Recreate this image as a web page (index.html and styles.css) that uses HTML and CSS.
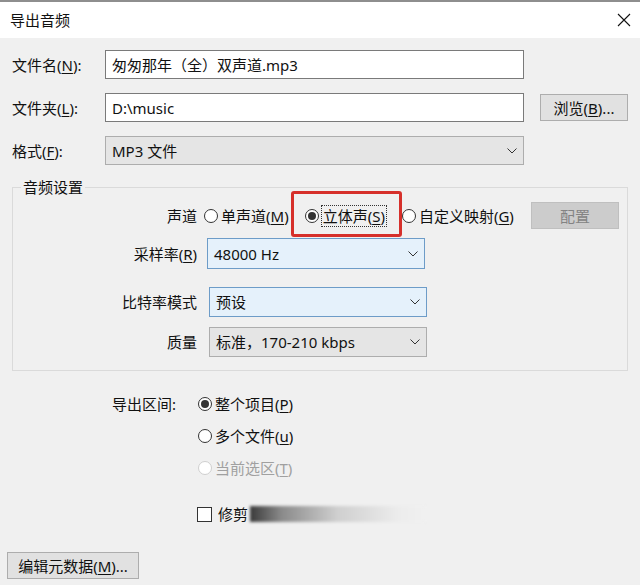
FILE: index.html
```html
<!DOCTYPE html>
<html lang="zh-CN">
<head>
<meta charset="utf-8">
<title>导出音频</title>
<link rel="stylesheet" href="styles.css">
</head>
<body>
<div class="window">
  <div class="titlebar">
    <span class="title">导出音频</span>
    <svg class="close" width="14" height="14" viewBox="0 0 14 14"><path d="M1 1L13 13M13 1L1 13" stroke="#111" stroke-width="1.1" fill="none"/></svg>
  </div>
  <div class="content">
    <div class="fields">
      <div class="flabel">文件名(<u>N</u>):</div>
      <div class="textbox">匆匆那年（全）双声道.mp3</div>
      <div></div>
      <div class="flabel">文件夹(<u>L</u>):</div>
      <div class="textbox">D:\music</div>
      <button class="btn browse">浏览(<u>B</u>)...</button>
      <div class="flabel">格式(<u>F</u>):</div>
      <div class="select gray"><span>MP3 文件</span><svg class="chev" width="10" height="6" viewBox="0 0 10 6"><path d="M0.5 0.5L5 5L9.5 0.5" stroke="#333" fill="none"/></svg></div>
      <div></div>
    </div>

    <div class="group">
      <div class="group-title">音频设置</div>
      <div class="grow channel">
        <div class="glabel">声道</div>
        <label class="radio"><span class="circle"></span><span>单声道(<u>M</u>)</span></label>
        <label class="radio"><span class="circle checked"></span><span class="focus">立体声(<u>S</u>)</span></label>
        <label class="radio"><span class="circle"></span><span>自定义映射(<u>G</u>)</span></label>
        <button class="btn disabled cfg">配置</button>
      </div>
      <div class="grow r1">
        <div class="glabel">采样率(<u>R</u>)</div>
        <div class="select blue s1"><span>48000 Hz</span><svg class="chev" width="10" height="6" viewBox="0 0 10 6"><path d="M0.5 0.5L5 5L9.5 0.5" stroke="#333" fill="none"/></svg></div>
      </div>
      <div class="grow r2">
        <div class="glabel">比特率模式</div>
        <div class="select blue s2"><span>预设</span><svg class="chev" width="10" height="6" viewBox="0 0 10 6"><path d="M0.5 0.5L5 5L9.5 0.5" stroke="#333" fill="none"/></svg></div>
      </div>
      <div class="grow r3">
        <div class="glabel">质量</div>
        <div class="select gray s2"><span>标准，170-210 kbps</span><svg class="chev" width="10" height="6" viewBox="0 0 10 6"><path d="M0.5 0.5L5 5L9.5 0.5" stroke="#333" fill="none"/></svg></div>
      </div>
      <div class="highlight"></div>
    </div>

    <div class="range">
      <div class="rlabel">导出区间:</div>
      <div class="ropts">
        <label class="radio"><span class="circle checked"></span><span>整个项目(<u>P</u>)</span></label>
        <label class="radio"><span class="circle"></span><span>多个文件(<u>u</u>)</span></label>
        <label class="radio off"><span class="circle"></span><span>当前选区(<u>T</u>)</span></label>
      </div>
    </div>

    <div class="trim">
      <span class="box"></span><span>修剪</span><span class="blur"></span>
    </div>

    <button class="btn meta">编辑元数据(<u>M</u>)...</button>
  </div>
</div>
</body>
</html>
```

FILE: styles.css
```css
html, body {
  margin: 0;
  padding: 0;
}
body {
  width: 640px;
  height: 585px;
  overflow: hidden;
  background: #f0f0f0;
  font-family: "Noto Sans", "Noto Sans CJK SC", sans-serif;
  font-size: 15px;
  color: #111;
}
u { text-decoration-thickness: 1px; text-underline-offset: 2px; }

.window {
  border-top: 2px solid #8e8e8e;
}
.titlebar {
  height: 36px;
  background: #fff;
  display: flex;
  align-items: center;
  justify-content: space-between;
  padding: 0 9px 0 10px;
}
.title { font-size: 15px; line-height: 20px; }

.content {
  padding: 12px 12px 0 12px;
}
.fields {
  display: grid;
  grid-template-columns: 93px 419px 104px;
  grid-auto-rows: 29px;
  row-gap: 14px;
  align-items: center;
}
.flabel { line-height: 20px; }
.textbox {
  height: 29px;
  box-sizing: border-box;
  border: 1px solid #7a7a7a;
  background: #fff;
  padding-left: 6px;
  display: flex;
  align-items: center;
  line-height: 20px;
}
.btn {
  font: inherit;
  font-size: 15px;
  color: #111;
  background: #e1e1e1;
  border: 1px solid #adadad;
  padding: 0;
  box-sizing: border-box;
  display: flex;
  align-items: center;
  justify-content: center;
  line-height: 20px;
}
.browse { height: 27px; width: 88px; justify-self: end; }

.select {
  height: 29px;
  box-sizing: border-box;
  display: flex;
  align-items: center;
  justify-content: space-between;
  padding: 0 6px 0 6px;
  line-height: 20px;
}
.select.gray { background: #e5e5e5; border: 1px solid #adadad; }
.select.blue { background: #e5f1fb; border: 1px solid #6d9cc8; }
.chev { flex: none; }

.group {
  position: relative;
  margin-top: 22px;
  border: 1px solid #dadada;
  padding: 0 8px 13px 0;
}
.group-title {
  width: fit-content;
  margin: -11px 0 0 8px;
  padding: 0 2px;
  background: #f0f0f0;
  line-height: 20px;
}
.grow {
  display: flex;
  align-items: center;
}
.glabel {
  width: 184px;
  text-align: right;
  line-height: 20px;
  flex: none;
}
.channel { height: 27px; margin-top: 5px; }
.channel .radio:first-of-type { margin-left: 7px; }
.channel .radio { margin-right: 16px; }
.cfg {
  margin-left: auto;
  width: 88px;
  height: 27px;
}
.btn.disabled { background: #cccccc; border-color: #bfbfbf; color: #838383; }

.r1 { margin-top: 9px; }
.r2 { margin-top: 18px; }
.r3 { margin-top: 10px; }
.s1 { margin-left: 10px; width: 218px; height: 31px; }
.s2 { margin-left: 12px; width: 218px; height: 30px; }

.radio {
  display: flex;
  align-items: center;
  gap: 3px;
  line-height: 20px;
  white-space: nowrap;
}
.circle {
  width: 14px;
  height: 14px;
  box-sizing: border-box;
  border: 1px solid #333;
  border-radius: 50%;
  background: #fff;
  display: flex;
  align-items: center;
  justify-content: center;
  flex: none;
}
.circle.checked::after {
  content: "";
  width: 8px;
  height: 8px;
  border-radius: 50%;
  background: #333;
}
.focus {
  outline: 1px dotted #333;
  outline-offset: 0;
  padding: 0 1px;
}
.radio.off { color: #a0a0a0; }
.radio.off .circle { border-color: #cfcfcf; }

.highlight {
  position: absolute;
  left: 278px;
  top: 3px;
  width: 111px;
  height: 46px;
  box-sizing: border-box;
  border: 3px solid #d6302b;
  border-radius: 3px;
}

.range {
  display: flex;
  margin-top: 23px;
  margin-left: 100px;
}
.rlabel { width: 86px; line-height: 20px; }
.ropts {
  display: flex;
  flex-direction: column;
  gap: 12px;
}

.trim {
  display: flex;
  align-items: center;
  gap: 6px;
  margin-top: 26px;
  margin-left: 185px;
  line-height: 20px;
}
.box {
  width: 15px;
  height: 15px;
  box-sizing: border-box;
  border: 1px solid #333;
  background: #fff;
}
.blur {
  margin-left: -4px;
  width: 175px;
  height: 16px;
  background: linear-gradient(to right, #3a3a3a 0%, #8a8a8a 18%, #cfcfcf 50%, #ececec 85%, #f0f0f0 100%);
  filter: blur(1.5px);
}

.meta {
  margin-top: 28px;
  margin-left: -5px;
  width: 132px;
  height: 27px;
}
```
